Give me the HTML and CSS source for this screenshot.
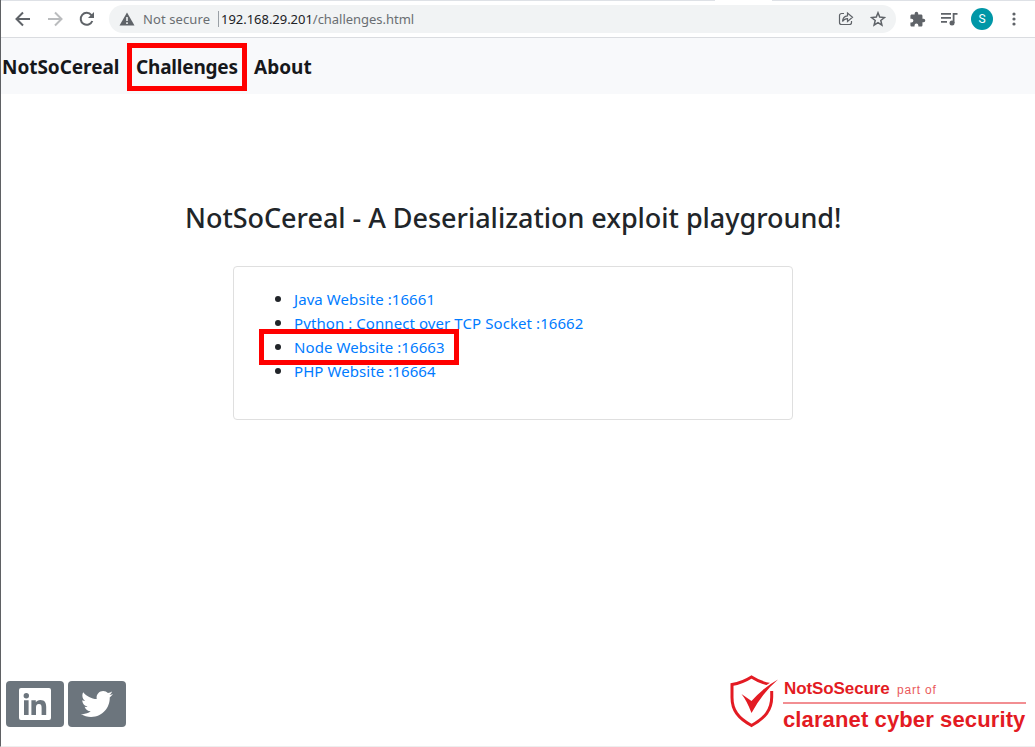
FILE: index.html
```html
<!DOCTYPE html>
<html lang="en">
<head>
<meta charset="utf-8">
<title>NotSoCereal</title>
<link rel="stylesheet" href="styles.css">
</head>
<body>
<div class="window">
  <header class="toolbar">
    <span class="tab"></span>
    <svg class="icon back" viewBox="0 0 16 16"><path d="M15 8H2M8 1.5 1.5 8 8 14.5"/></svg>
    <svg class="icon forward" viewBox="0 0 16 16"><path d="M1 8h13M8 1.5 14.5 8 8 14.5"/></svg>
    <svg class="icon reload" viewBox="0 0 16 16"><path d="M13.3 10A6 6 0 1 1 12.4 4.1L14 6"/><path class="solid" d="M15 1v6H9z"/></svg>
    <div class="address">
      <svg class="warning" viewBox="0 0 16 14"><path d="M8 .5 15.5 13.5H.5z" fill="#5f6368"/><path d="M8 5v4M8 10.3v1.6" stroke="#f1f3f4" stroke-width="1.6"/></svg>
      <span class="insecure">Not secure</span>
      <span class="divider"></span>
      <span class="url"><b>192.168.29.201</b>/challenges.html</span>
      <svg class="share" viewBox="0 0 16 16"><path d="M6 2.5H3.5a2 2 0 0 0-2 2v7a2 2 0 0 0 2 2h8a2 2 0 0 0 2-2V10M4.500 10.500c.2-3.500 2-5.500 5-5.700V2l5 4.200-5 4.200V7.600c-2.300 0-3.700.8-5 2.900z"/></svg>
      <svg class="star" viewBox="0 0 16 16"><path d="m8 1.800 1.700 4.300 4.700.4-3.600 3 1.100 4.600L8 11.600l-3.900 2.500 1.100-4.600-3.600-3 4.700-.4z"/></svg>
    </div>
    <svg class="puzzle" viewBox="0 0 24 24"><path d="M20.500 11H19V7c0-1.100-.9-2-2-2h-4V3.500a2.500 2.500 0 0 0-5 0V5H4c-1.100 0-2 .9-2 2v3.800h1.500a2.700 2.700 0 0 1 0 5.400H2V20c0 1.100.9 2 2 2h3.800v-1.500a2.700 2.700 0 0 1 5.400 0V22H17c1.100 0 2-.9 2-2v-4h1.500a2.500 2.500 0 0 0 0-5z"/></svg>
    <svg class="music" viewBox="0 0 17 14"><path d="M0 1.800h10M0 5.800h10M0 9.800h6M12.600 11V1.800H16.500"/><circle cx="11" cy="11" r="2.500"/></svg>
    <span class="avatar">S</span>
    <svg class="menu" viewBox="0 0 4 14"><circle cx="2" cy="2" r="1.600"/><circle cx="2" cy="7" r="1.600"/><circle cx="2" cy="12" r="1.600"/></svg>
  </header>
  <nav class="nav">
    <a class="brand">NotSoCereal</a>
    <a class="challenges">Challenges</a>
    <a class="about">About</a>
  </nav>
  <main class="main">
    <h1 class="title">NotSoCereal - A Deserialization exploit playground!</h1>
    <section class="card">
      <ul class="list">
        <li><a class="java">Java Website :16661</a></li>
        <li><a class="python">Python : Connect over TCP Socket :16662</a></li>
        <li class="marked"><a class="node">Node Website :16663</a></li>
        <li><a class="php">PHP Website :16664</a></li>
      </ul>
    </section>
  </main>
  <footer class="footer">
    <a class="social"><svg class="linkedin" viewBox="0 0 32 32"><path fill="#fff" fill-rule="evenodd" d="M2 0h28a2 2 0 0 1 2 2v28a2 2 0 0 1-2 2H2a2 2 0 0 1-2-2V2a2 2 0 0 1 2-2zM5 12.300h4.600V27H5zM7.300 5a2.700 2.700 0 1 0 0 5.400 2.700 2.700 0 0 0 0-5.400zM12.400 12.300h4.400v2c.8-1.500 2.400-2.400 4.500-2.400 4.600 0 5.900 2.800 5.900 7V27h-4.600v-7.200c0-2.200-.4-3.900-2.700-3.900s-2.900 1.700-2.900 3.800V27h-4.600z"/></svg></a>
    <a class="social"><svg class="twitter" viewBox="0 0 512 512"><path fill="#fff" d="M459.370 151.716c.325 4.548.325 9.097.325 13.645 0 138.720-105.583 298.558-298.558 298.558-59.452 0-114.680-17.219-161.137-47.106 8.447.974 16.568 1.299 25.340 1.299 49.055 0 94.213-16.568 130.274-44.832-46.132-.975-84.792-31.188-98.112-72.772 6.498.974 12.995 1.624 19.818 1.624 9.421 0 18.843-1.300 27.614-3.573-48.081-9.747-84.143-51.980-84.143-102.985v-1.299c13.969 7.797 30.214 12.670 47.431 13.319-28.264-18.843-46.781-51.005-46.781-87.391 0-19.492 5.197-37.360 14.294-52.954 51.655 63.675 129.300 105.258 216.365 109.807-1.624-7.797-2.599-15.918-2.599-24.040 0-57.828 46.782-104.934 104.934-104.934 30.213 0 57.502 12.670 76.670 33.137 23.715-4.548 46.456-13.320 66.599-25.340-7.798 24.366-24.366 44.833-46.132 57.827 21.117-2.273 41.584-8.122 60.426-16.243-14.292 20.791-32.161 39.308-52.628 54.253z"/></svg></a>
    <div class="logo">
      <svg class="shield" viewBox="0 0 50 54"><path d="M41.500 10.500Q32 9 22.500 3 13 9 3 10.500v13C3 36 9 44 22.500 51.500 36 44 42.700 36 42.700 23v-6" fill="none" stroke="#e31b23" stroke-width="3"/><path d="M50 3 36 12l6 2z" fill="#fff"/><path d="M49 5.500Q34 18 22.500 39 18 27 12.500 20l10 7Q35 13 49 5.500z" fill="#e31b23"/></svg>
      <div class="words">
        <div class="row"><strong class="nss">NotSoSecure</strong><span class="part">part of</span></div>
        <strong class="claranet">claranet cyber security</strong>
      </div>
    </div>
  </footer>
</div>
</body>
</html>
```
FILE: styles.css
```css
*, *::before { box-sizing: border-box; }
body { margin: 0; font-family: "Noto Sans", "Open Sans", sans-serif; color: #212529; background: #fff; }
.window { display: flex; flex-direction: column; width: 1035px; height: 747px; border-left: 1px solid #5f6164; border-bottom: 1px solid #eee; overflow: hidden; }
svg { display: block; flex: none; }
span, a, strong { white-space: nowrap; }

.toolbar { position: relative; display: flex; align-items: center; height: 38px; border-top: 1px solid #dee1e6; border-bottom: 1px solid #dadce0; padding-left: 14px; flex: none; }
.tab { position: absolute; left: 714px; top: -1px; width: 57px; height: 1px; background: #fff; }
.icon { width: 16px; height: 16px; margin-right: 16px; fill: none; stroke: #5f6368; stroke-width: 2; }
.forward { stroke: #babcbe; }
.reload .solid { fill: #5f6368; stroke: none; }
.address { display: flex; align-items: center; width: 787px; height: 28px; margin-left: -2px; padding-left: 10px; border-radius: 14px; background: #f1f3f4; font-size: 13px; color: #6a6e72; }
.warning { width: 16px; height: 14px; }
.insecure { width: 75px; margin-left: 8px; letter-spacing: .1px; }
.divider { width: 1px; height: 16px; background: #9aa0a6; }
.url { width: 617px; margin-left: 2px; letter-spacing: -.03px; }
.url b { font-weight: 400; color: #202124; }
.share, .star { width: 16px; height: 16px; fill: none; stroke: #5f6368; stroke-width: 1.200; }
.star { margin-left: 16px; stroke-width: 1.500; }
.puzzle { width: 17px; height: 17px; margin-left: 13px; fill: #5f6368; }
.music { width: 17px; height: 14px; margin-left: 15px; fill: #5f6368; }
.music path { fill: none; stroke: #5f6368; stroke-width: 1.800; }
.avatar { width: 22px; height: 22px; margin-left: 13px; border-radius: 50%; background: #0097a7; color: #fff; font: 12px/22px Roboto, sans-serif; text-align: center; }
.menu { width: 4px; height: 14px; margin-left: 19px; fill: #5f6368; }

.nav { display: flex; align-items: center; height: 56px; flex: none; padding: 2px 0 0 1px; background: #f8f9fb; color: #16181b; font-size: 19px; font-weight: 700; letter-spacing: -.2px; }
.brand { width: 125px; letter-spacing: -.05px; }
.challenges { width: 120px; height: 48px; padding-left: 4px; border: 5px solid #f00; line-height: 38px; }
.about { margin-left: 7px; letter-spacing: 0; }

.main { flex: 1; padding-top: 104px; }
.title { margin: 0 0 28px 184px; font-size: 27px; line-height: 40px; font-weight: 500; letter-spacing: -.03px; white-space: nowrap; }
.card { width: 560px; height: 154px; margin-left: 232px; padding-top: 19px; border: 1px solid #dfdfdf; border-radius: 4px; }
.list { margin: 0; padding-left: 60px; font-size: 15px; line-height: 24px; letter-spacing: .08px; }
.list li { height: 24px; }
.list li::marker { font-size: 18px; }
.list a { color: #007bff; }
.marked { position: relative; }
.marked::before { content: ""; position: absolute; left: -35px; top: -5px; width: 200px; height: 36px; border: 5px solid #f00; }

.footer { display: flex; height: 72px; flex: none; padding-left: 5px; }
.social { display: flex; justify-content: center; align-items: center; width: 58px; height: 46px; margin: 7px 4px 0 0; border-radius: 4px; background: #6c757d; }
.linkedin, .twitter { width: 32px; height: 32px; }
.logo { display: flex; margin-left: 599px; color: #e31b23; font-family: "Liberation Sans", sans-serif; }
.shield { width: 50px; height: 54px; }
.words { width: 243px; margin-left: 4px; }
.row { display: flex; align-items: baseline; height: 30px; padding: 5px 0 0 1px; border-bottom: 2px solid #f28e92; }
.nss { font-size: 17px; line-height: 19px; width: 113px; letter-spacing: -.1px; }
.part { font-size: 12px; opacity: .75; letter-spacing: .8px; }
.claranet { display: block; font-size: 22px; line-height: 31px; letter-spacing: .12px; }
```
